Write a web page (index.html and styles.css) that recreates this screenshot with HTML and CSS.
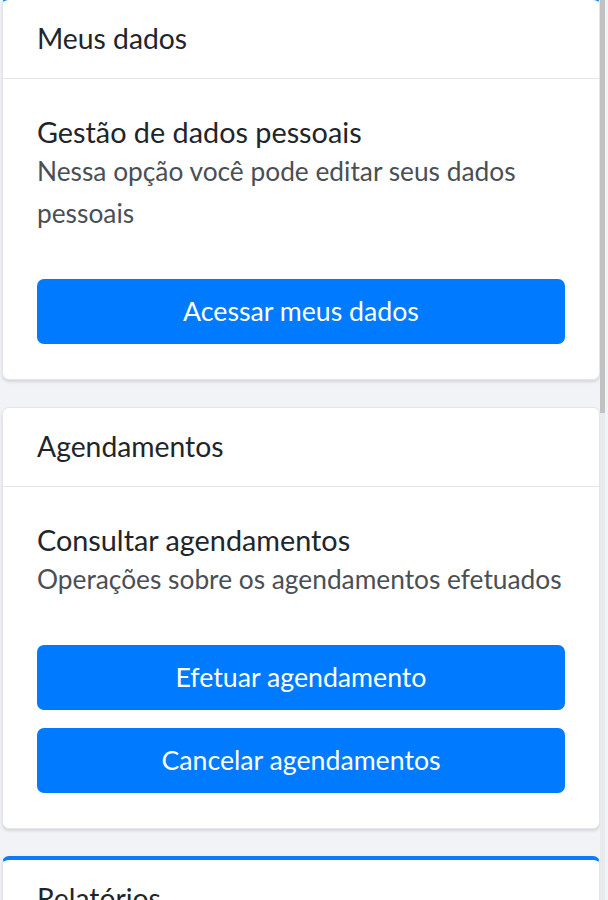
FILE: index.html
```html
<!DOCTYPE html>
<html lang="pt-BR">
<head>
<meta charset="UTF-8" />
<meta name="viewport" content="width=device-width, initial-scale=1" />
<title>Painel</title>
<link rel="stylesheet" href="styles.css">
</head>
<body>
<div class="page">
  <div class="card card-top">
    <div class="card-header">Meus dados</div>
    <div class="card-body">
      <h5 class="card-title">Gestão de dados pessoais</h5>
      <p class="card-text">Nessa opção você pode editar seus dados pessoais</p>
      <div class="actions">
        <a href="#" class="btn">Acessar meus dados</a>
      </div>
    </div>
  </div>

  <div class="card">
    <div class="card-header">Agendamentos</div>
    <div class="card-body">
      <h5 class="card-title">Consultar agendamentos</h5>
      <p class="card-text">Operações sobre os agendamentos efetuados</p>
      <div class="actions">
        <a href="#" class="btn">Efetuar agendamento</a>
        <a href="#" class="btn">Cancelar agendamentos</a>
      </div>
    </div>
  </div>

  <div class="card card-top">
    <div class="card-header">Relatórios</div>
    <div class="card-body">
      <h5 class="card-title">Relatórios</h5>
    </div>
  </div>
</div>
<div class="scrollbar"><div class="thumb"></div></div>
</body>
</html>
```

FILE: styles.css
```css
body { margin:0; background:#f1f3f6; font-family: Lato, "Open Sans", sans-serif; color:#212529; overflow:hidden; }
.page { display:flex; flex-direction:column; gap:27px; padding:0 8px 0 2px; margin-top:-4px; }
.card { background:#fff; border:1px solid #e3e5e8; border-radius:7px; box-shadow:0 2px 3px rgba(0,0,0,0.12); }
.card-top { border-top:4px solid #0d7bf5; }
.card-header { padding:17px 34px 19px; font-size:28.3px; line-height:42px; border-bottom:1px solid #e3e5e8; }
.card-body { padding:35px 34px; }
.card-title { margin:0; font-size:28.8px; font-weight:normal; line-height:36px; }
.card-text { margin:0; font-size:26.3px; line-height:42px; color:#4a4f54; }
.actions { display:flex; flex-direction:column; gap:18px; margin-top:45px; }
.btn { display:block; background:#007bff; color:#fff; text-align:center; text-decoration:none; font-size:26.7px; line-height:65px; border-radius:7px; }
.scrollbar { position:fixed; top:0; right:3px; width:5px; height:100%; background:#e9eaec; }
.thumb { height:413px; background:#c1c1c1; }
```
